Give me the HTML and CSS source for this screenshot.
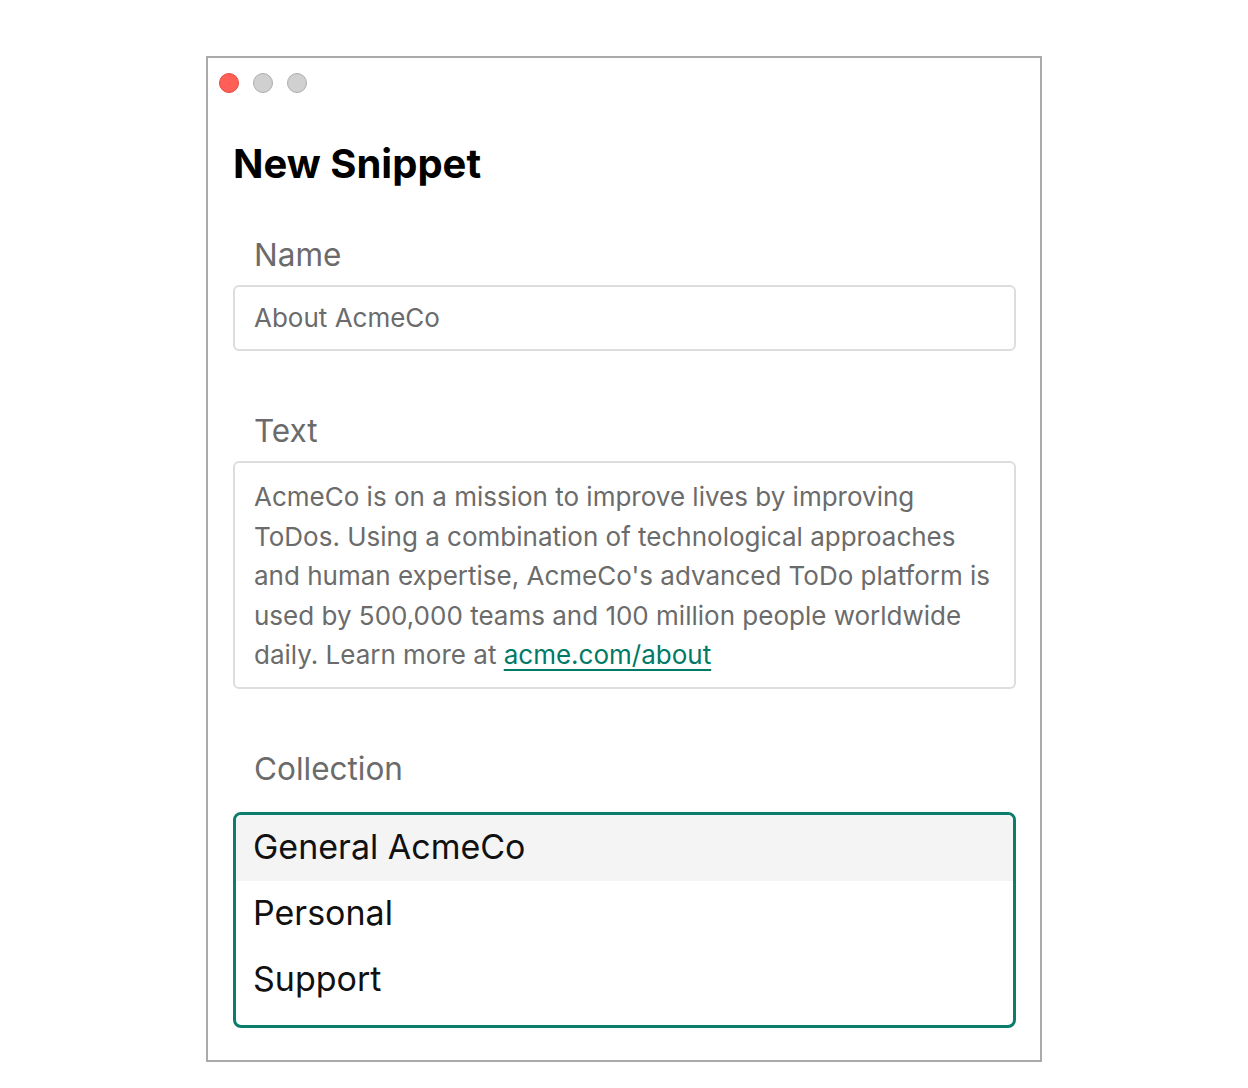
FILE: index.html
```html
<!DOCTYPE html>
<html lang="en">
<head>
	<meta charset="UTF-8">
	<meta name="viewport" content="width=device-width, initial-scale=1.0">
	<title>New Snippet</title>
	<link rel="stylesheet" href="styles.css">
</head>
<body>
	<div class="window">
		<div class="titlebar">
			<span class="dot close"></span>
			<span class="dot"></span>
			<span class="dot"></span>
		</div>
		<div class="content">
			<h1 class="title">New Snippet</h1>

			<div class="field first">
				<div class="label">Name</div>
				<div class="input">About AcmeCo</div>
			</div>

			<div class="field">
				<div class="label">Text</div>
				<div class="textarea">AcmeCo is on a mission to improve lives by improving ToDos. Using a combination of technological approaches and human expertise, AcmeCo's advanced ToDo platform is used by 500,000 teams and 100 million people worldwide daily. Learn more at <a href="#">acme.com/about</a></div>
			</div>

			<div class="field">
				<div class="label">Collection</div>
				<ul class="listbox">
					<li class="selected">General AcmeCo</li>
					<li>Personal</li>
					<li>Support</li>
				</ul>
			</div>
		</div>
	</div>
</body>
</html>
```

FILE: styles.css
```css
body,ul,h1{
	margin:0;
	padding:0;
}

body{
	font-family:Inter,"Noto Sans",sans-serif;
	background-color:#fff;
	padding-top:56px;
}

.window{
	width:832px;
	height:1002px;
	margin:0 auto;
	border:2px solid #aaa;
}

.titlebar{
	display:flex;
	gap:14px;
	padding:15px 11px 0;
}

.dot{
	width:18px;
	height:18px;
	border-radius:50%;
	background-color:#d0d0d0;
	border:1px solid #adadad;
}

.dot.close{
	background-color:#ff5f57;
	border-color:#e6483f;
}

.content{
	padding:0 24px 0 25px;
}

.title{
	font-size:40px;
	font-weight:700;
	color:#000;
	margin-top:47px;
	line-height:48px;
}

.field{
	margin-top:60px;
}

.field.first{
	margin-top:47px;
}

.label{
	font-size:31.5px;
	color:#6b6b6b;
	padding-left:21px;
	line-height:40px;
	margin-bottom:10px;
}

.input,.textarea{
	border:2px solid #ddd;
	border-radius:6px;
	color:#6b6b6b;
	font-size:26px;
	padding:0 19px;
}

.input{
	height:62px;
	line-height:62px;
}

.textarea{
	padding-top:14px;
	padding-bottom:12px;
	line-height:39.5px;
}

.textarea a{
	color:#007a66;
	text-decoration:underline;
	text-underline-offset:5px;
	text-decoration-thickness:2px;
}

.listbox{
	list-style:none;
	margin-top:23px;
	border:3px solid #0a7d6c;
	border-radius:8px;
	overflow:hidden;
	padding-bottom:12px;
}

.listbox li{
	font-size:34px;
	color:#111;
	padding:0 17px;
	height:66px;
	line-height:64px;
}

.listbox li.selected{
	background-color:#f4f4f4;
}
```
